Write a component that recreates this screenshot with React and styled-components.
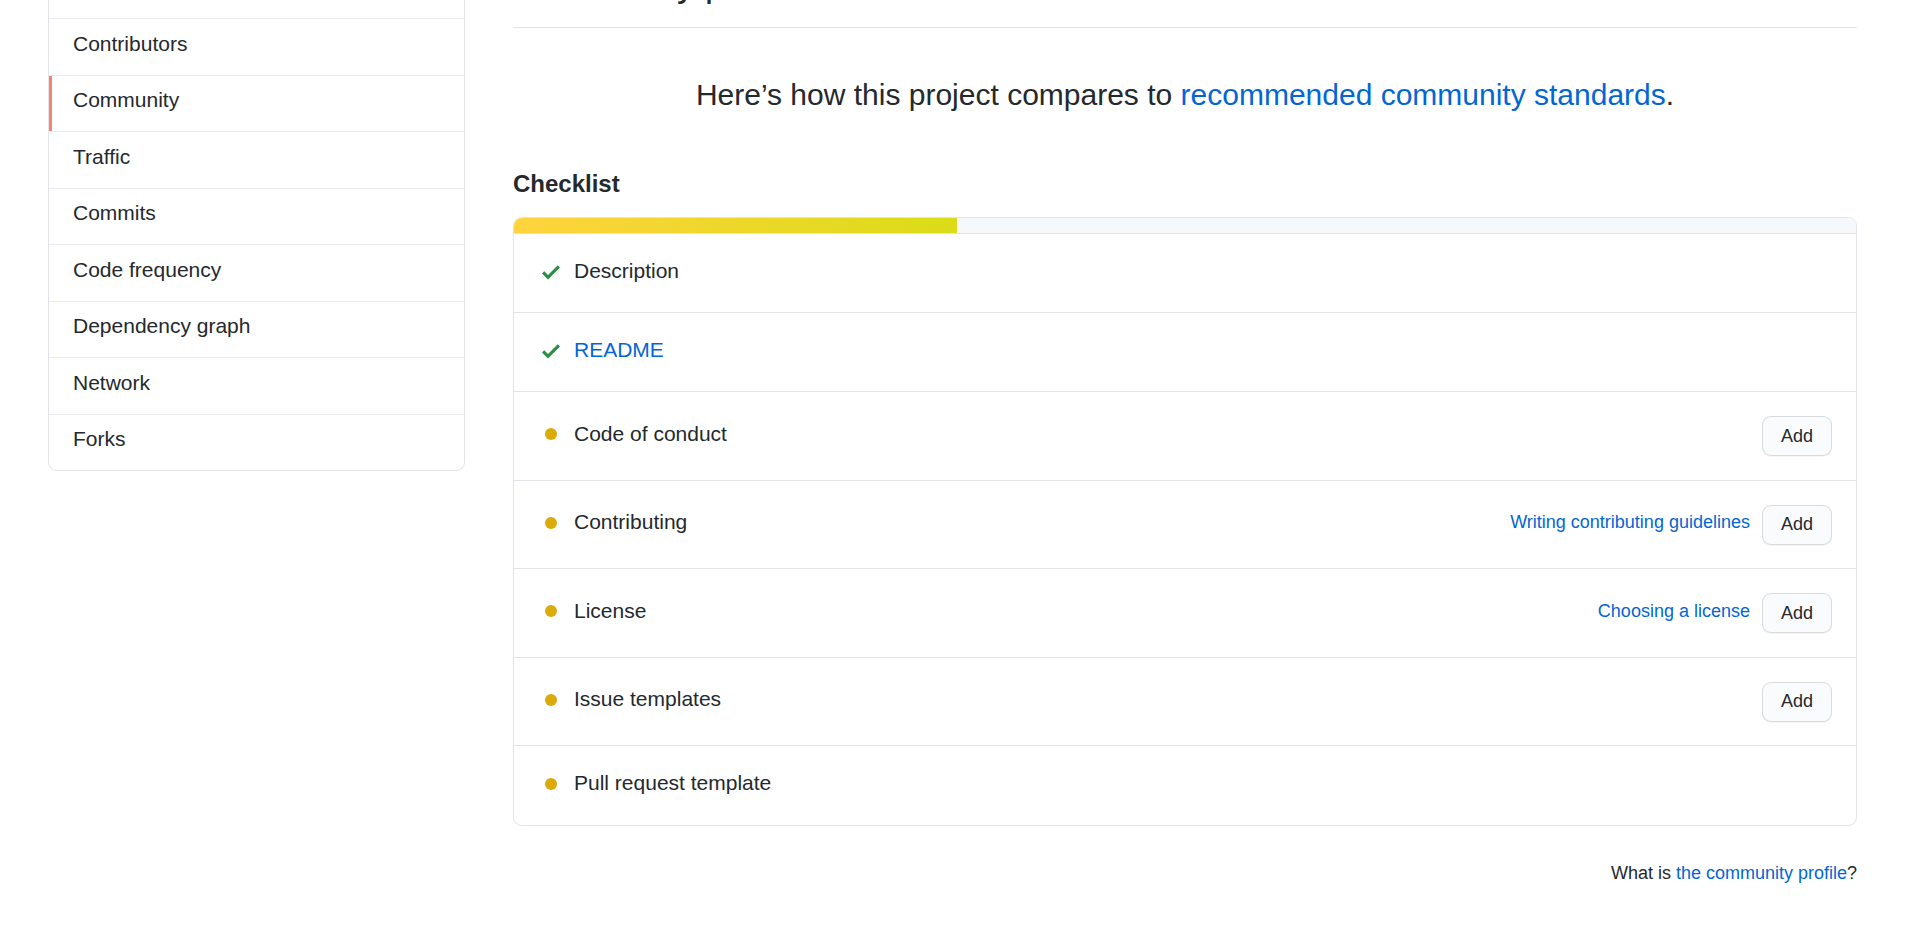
import React from "react";
import styled, { createGlobalStyle } from "styled-components";

const GlobalStyle = createGlobalStyle`
  html, body {
    margin: 0;
    padding: 0;
    background: #ffffff;
  }
  body {
    font-family: "Liberation Sans", Arial, Helvetica, sans-serif;
    color: #24292e;
    overflow: hidden;
  }
  a {
    color: #0366d6;
    text-decoration: none;
  }
`;

const Page = styled.div`
  display: grid;
  grid-template-columns: 416.5px 1fr;
  column-gap: 48.5px;
  align-items: start;
  padding: 0 49px 0 48px;
  margin-top: -38.5px;
`;

const SideMenu = styled.nav`
  border: 1px solid #e1e4e8;
  border-radius: 9px;
  overflow: hidden;
  background: #fff;
`;

const MenuItem = styled.a`
  position: relative;
  display: block;
  padding: 8.5px 24px 15.5px;
  font-size: 21px;
  line-height: 31.5px;
  color: #24292e;
  border-bottom: 1px solid #eaecef;

  &:last-child {
    border-bottom: none;
  }

  ${(p) =>
    p.$selected &&
    `
    &::before {
      content: "";
      position: absolute;
      left: 0;
      top: 0;
      bottom: 0;
      width: 3px;
      background: #f9826c;
    }
  `}
`;

const Main = styled.main`
  display: flex;
  flex-direction: column;
  min-width: 0;
`;

const Subhead = styled.div`
  display: flex;
  padding-bottom: 21px;
  border-bottom: 1px solid #e1e4e8;
`;

const SubheadHeading = styled.h2`
  margin: 0;
  flex: 1 1 auto;
  font-size: 36px;
  line-height: 44.5px;
  font-weight: 400;
`;

const Lead = styled.p`
  margin: 43.5px 0 0;
  text-align: center;
  font-size: 30px;
  line-height: 45px;
`;

const SectionTitle = styled.h3`
  margin: 49px 0 15.5px;
  font-size: 24px;
  line-height: 36px;
  font-weight: 700;
`;

const Box = styled.div`
  border: 1px solid #e1e4e8;
  border-radius: 9px;
  overflow: hidden;
  background: #fff;
`;

const Progress = styled.div`
  display: flex;
  height: 15px;
  background: #f6f8fa;
  border-bottom: 1px solid #e1e4e8;
`;

const ProgressFill = styled.span`
  display: block;
  height: 100%;
  background-image: linear-gradient(90deg, #ffd33d, #dbdc17);
`;

const Row = styled.div`
  display: flex;
  align-items: center;
  padding: 21px 24px 24px;
  border-bottom: 1px solid #e1e4e8;

  &:last-child {
    border-bottom: none;
    padding-bottom: 25px;
  }
`;

const IconCell = styled.span`
  flex: 0 0 25px;
  display: flex;
  align-items: center;
  justify-content: center;
  margin-right: 11px;
`;

const Dot = styled.span`
  width: 12px;
  height: 12px;
  border-radius: 50%;
  background: #dbab09;
`;

const Label = styled.span`
  flex: 1 1 auto;
  padding-bottom: 2px;
  font-size: 21px;
  line-height: 31px;
  color: ${(p) => (p.$link ? "#0366d6" : "#24292e")};
`;

const HelpLink = styled.a`
  font-size: 18px;
  line-height: 27px;
  margin-right: 12px;
  white-space: nowrap;
`;

const Button = styled.button`
  height: 40px;
  margin: 3px 0 -0.5px;
  padding: 0 18px;
  font-family: inherit;
  font-size: 18px;
  line-height: 27px;
  color: #24292e;
  background: #fafbfc;
  border: 1px solid rgba(27, 31, 35, 0.15);
  border-radius: 9px;
  box-shadow: 0 1px 0 rgba(27, 31, 35, 0.04);
  cursor: pointer;
`;

const Footer = styled.p`
  margin: 34px 0 0;
  text-align: right;
  font-size: 18px;
  line-height: 27px;
`;

const CheckIcon = () => (
  <svg width="18" height="24" viewBox="0 0 12 16" aria-hidden="true">
    <path fill="#2a8f43" d="M12 5l-8 8-4-4 1.5-1.5L4 10l6.5-6.5L12 5z" />
  </svg>
);

const menu = [
  "Pulse",
  "Contributors",
  "Community",
  "Traffic",
  "Commits",
  "Code frequency",
  "Dependency graph",
  "Network",
  "Forks",
];

const checklist = [
  { label: "Description", done: true },
  { label: "README", done: true, link: true },
  { label: "Code of conduct", add: true },
  { label: "Contributing", help: "Writing contributing guidelines", add: true },
  { label: "License", help: "Choosing a license", add: true },
  { label: "Issue templates", add: true },
  { label: "Pull request template" },
];

const progress = 33;

export default function App() {
  return (
    <>
      <GlobalStyle />
      <Page>
        <SideMenu>
          {menu.map((m) => (
            <MenuItem key={m} href="#" $selected={m === "Community"}>
              {m}
            </MenuItem>
          ))}
        </SideMenu>
        <Main>
          <Subhead>
            <SubheadHeading>Community profile</SubheadHeading>
          </Subhead>
          <Lead>
            Here’s how this project compares to{" "}
            <a href="#">recommended community standards</a>.
          </Lead>
          <SectionTitle>Checklist</SectionTitle>
          <Box>
            <Progress>
              <ProgressFill style={{ width: `${progress}%` }} />
            </Progress>
            {checklist.map((item) => (
              <Row key={item.label}>
                <IconCell>{item.done ? <CheckIcon /> : <Dot />}</IconCell>
                <Label $link={item.link}>{item.label}</Label>
                {item.help && <HelpLink href="#">{item.help}</HelpLink>}
                {item.add && <Button type="button">Add</Button>}
              </Row>
            ))}
          </Box>
          <Footer>
            What is <a href="#">the community profile</a>?
          </Footer>
        </Main>
      </Page>
    </>
  );
}
